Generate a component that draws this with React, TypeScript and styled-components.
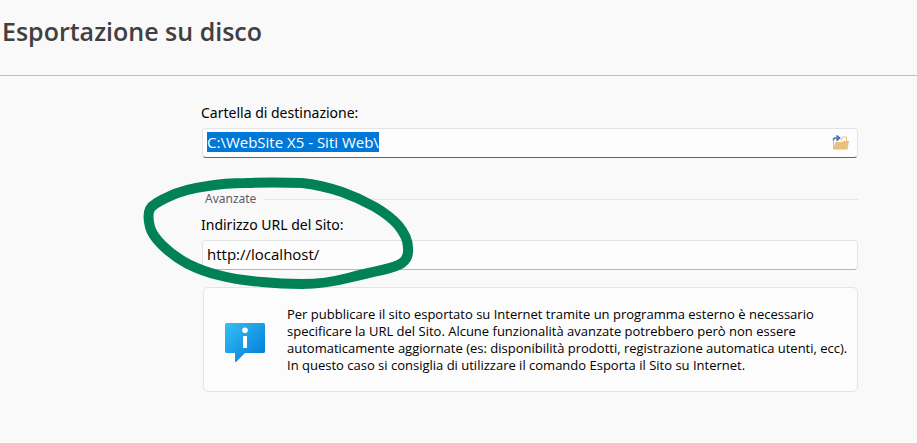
import React, { useEffect, useRef } from "react";
import styled, { createGlobalStyle } from "styled-components";

const GlobalStyle = createGlobalStyle`
  *, *::before, *::after { box-sizing: border-box; }
  body {
    margin: 0;
    background: #f9f9f9;
    color: #000;
    font-family: "Segoe UI", "Noto Sans", sans-serif;
  }
`;

const Header = styled.header`
  height: 76px;
  padding: 12px 2px 0;
  border-bottom: 1px solid #bdbdbd;
`;

const Title = styled.h1`
  margin: 0;
  color: #404040;
  font: 600 25px/38px "Segoe UI", "Open Sans", "Noto Sans", sans-serif;
`;

const Form = styled.form`
  padding: 25px 59px 40px 201px;
`;

const FieldLabel = styled.label`
  display: block;
  height: 27px;
  font-size: 14px;
  line-height: 24px;
`;

const Field = styled.div<{ $active?: boolean }>`
  display: flex;
  align-items: center;
  height: 30px;
  margin-left: 1px;
  padding: 0 7px 0 4px;
  background: #fdfdfd;
  border: 1px solid #e2e4e7;
  border-bottom-color: ${(p) => (p.$active ? "#0f7fae" : "#b4b7b7")};
  border-radius: 4px;
`;

const TextInput = styled.input`
  flex: 1;
  min-width: 0;
  height: 20px;
  margin-bottom: 2px;
  padding: 0;
  border: 0;
  outline: 0;
  background: transparent;
  color: #000;
  font: 15px/20px "Segoe UI", "Open Sans", "Noto Sans", sans-serif;
  &::selection { background: #0078d7; color: #fff; }
`;

const BrowseButton = styled.button`
  display: flex;
  padding: 0;
  border: 0;
  background: transparent;
`;

const Advanced = styled.fieldset`
  position: relative;
  min-width: 0;
  margin: 31px 0 0;
  padding: 0;
  border: 0;
`;

const Legend = styled.legend`
  display: flex;
  align-items: center;
  gap: 8px;
  width: 100%;
  padding: 0 0 0 4px;
  color: #5c5c5c;
  font-size: 12px;
  line-height: 20px;
  margin-bottom: 4px;
  &::after {
    content: "";
    flex: 1;
    height: 1px;
    background: #e4e6e9;
  }
`;

const Notice = styled.section`
  display: flex;
  align-items: center;
  gap: 22px;
  min-height: 105px;
  margin: 17px 0 0 2px;
  padding: 16px 8px 16px 21px;
  background: #fcfcfc;
  border: 1px solid #e2e4e7;
  border-radius: 5px;
`;

const NoticeIcon = styled.svg`
  flex-shrink: 0;
  margin-top: 4px;
`;

const NoticeText = styled.p`
  margin: 0;
  font: 13px/17px "Segoe UI", "Open Sans", "Noto Sans", sans-serif;
`;

const Marker = styled.svg`
  position: absolute;
  top: -35px;
  left: -61px;
  overflow: visible;
  pointer-events: none;
`;

const FolderIcon = () => (
  <svg width="18" height="16" viewBox="0 0 18 16" aria-hidden="true">
    <path d="M1.500 14V6M8.500 5h1l1.500-3h3.500v5" fill="none" stroke="#e8bf7c" />
    <path d="M1 14.500 3.500 7H10l1-1h6l-1.500 8.500z" fill="#e9c07d" />
    <path d="M1.500 5.500V4.500Q1.500 3 3 3H7" fill="none" stroke="#3b73bd" strokeWidth="1.500" />
    <path d="M4.500 0.500 7.500 3 4.500 5.500" fill="none" stroke="#3b73bd" strokeWidth="1.700" />
  </svg>
);

const InfoIcon = () => (
  <NoticeIcon width="40" height="40" viewBox="0 0 40 40" aria-hidden="true">
    <defs>
      <linearGradient id="bubble" x1="0" y1="0" x2="1" y2="1">
        <stop offset="0" stopColor="#35c0f3" />
        <stop offset="1" stopColor="#0078d7" />
      </linearGradient>
    </defs>
    <path d="M1.500 1h37Q40 1 40 2.500v27Q40 31 38.500 31H20l-9 9h-1v-9H1.500Q0 31 0 29.500v-27Q0 1 1.500 1z" fill="url(#bubble)" />
    <circle cx="20" cy="8.300" r="2.800" fill="#fff" />
    <path d="M18 14h4v12h-4z" fill="#fff" />
  </NoticeIcon>
);

export default function App() {
  const folderRef = useRef<HTMLInputElement>(null);

  useEffect(() => {
    folderRef.current?.focus();
    folderRef.current?.select();
  }, []);

  return (
    <>
      <GlobalStyle />
      <Header>
        <Title>Esportazione su disco</Title>
      </Header>
      <Form>
        <FieldLabel htmlFor="folder">Cartella di destinazione:</FieldLabel>
        <Field $active>
          <TextInput ref={folderRef} id="folder" defaultValue={"C:\\WebSite X5 - Siti Web\\"} spellCheck={false} />
          <BrowseButton type="button" aria-label="Sfoglia">
            <FolderIcon />
          </BrowseButton>
        </Field>
        <Advanced>
          <Legend>Avanzate</Legend>
          <FieldLabel htmlFor="url">Indirizzo URL del Sito:</FieldLabel>
          <Field>
            <TextInput id="url" defaultValue="http://localhost/" spellCheck={false} />
          </Field>
          <Marker width="280" height="122" viewBox="140 178 280 122" aria-hidden="true">
            <path
              d="M150 209C153 204 160 201 168 197Q184 189 208 186Q225 183 245 183Q273 182 302 183Q321 185 342 192Q359 198 375 207Q390 216 398 225Q408 237 408 248Q409 258 402 263Q396 267 382 270Q368 273 348 278Q325 284 302 284Q281 284 262 282Q237 280 218 275Q202 271 188 264Q173 256 162 245Q152 235 150 227Q147 215 150 209Z"
              fill="none"
              stroke="#008156"
              strokeWidth="10"
              strokeLinejoin="round"
            />
          </Marker>
        </Advanced>
        <Notice>
          <InfoIcon />
          <NoticeText>
            Per pubblicare il sito esportato su Internet tramite un programma esterno è necessario
            <br />
            specificare la URL del Sito. Alcune funzionalità avanzate potrebbero però non essere
            <br />
            automaticamente aggiornate (es: disponibilità prodotti, registrazione automatica utenti, ecc).
            <br />
            In questo caso si consiglia di utilizzare il comando Esporta il Sito su Internet.
          </NoticeText>
        </Notice>
      </Form>
    </>
  );
}
